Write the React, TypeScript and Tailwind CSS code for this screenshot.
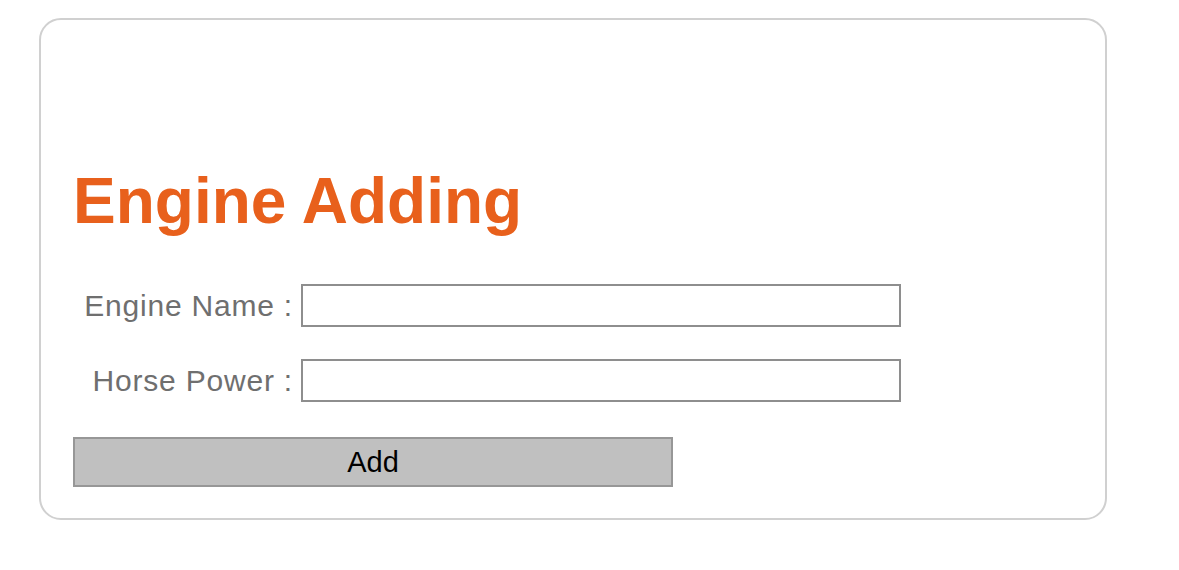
import React from "react";

export default function App() {
  return (
    <div className="w-[1179px] h-[570px] bg-white pt-[18px] pl-[39px]" style={{ fontFamily: '"Liberation Sans", Arial, sans-serif' }}>
      <div className="w-[1068px] h-[502px] rounded-[22px] border-2 border-[#d0d0d0] pl-[32px] pt-[150px]">
        <h1 className="text-[64px] leading-[63px] font-bold text-[#e8601c]">Engine Adding</h1>
        <div className="mt-[51px] grid grid-cols-[220px_600px] gap-x-[8px] gap-y-[32px] items-center">
          <label className="text-right text-[30px] tracking-[0.8px] leading-none text-[#6f6f6f]">Engine Name :</label>
          <input type="text" className="h-[43px] border-2 border-[#8e8e8e] bg-white outline-none" />
          <label className="text-right text-[30px] tracking-[0.8px] leading-none text-[#6f6f6f]">Horse Power :</label>
          <input type="text" className="h-[43px] border-2 border-[#8e8e8e] bg-white outline-none" />
        </div>
        <button className="mt-[35px] w-[600px] h-[50px] bg-[#c0c0c0] border-2 border-[#979797] text-[29px] text-black leading-none">Add</button>
      </div>
    </div>
  );
}
